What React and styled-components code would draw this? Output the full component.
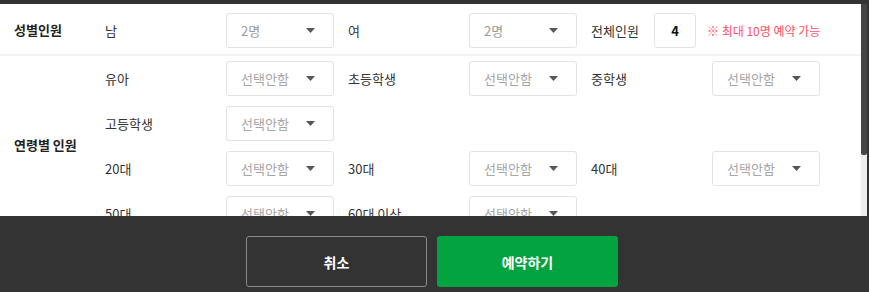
import React from 'react';
import styled, { createGlobalStyle } from 'styled-components';

const GlobalStyle = createGlobalStyle`
  html, body {
    margin: 0;
    padding: 0;
    background: #333333;
  }
  body {
    font-family: "Noto Sans CJK KR", "Noto Sans", sans-serif;
  }
`;

const ageRows = [
  ['유아', '초등학생', '중학생'],
  ['고등학생'],
  ['20대', '30대', '40대'],
  ['50대', '60대 이상'],
];

const Caret = () => (
  <svg width="9" height="5" viewBox="0 0 9 5">
    <path d="M0 0 H9 L4.5 5 Z" fill="#555" />
  </svg>
);

const SelectField = ({ value, dim }) => (
  <SelectBox>
    <SelectText dim={dim}>{value}</SelectText>
    <Caret />
  </SelectBox>
);

const Field = ({ label, value, dim }) => (
  <FieldItem>
    <SubLabel>{label}</SubLabel>
    <SelectField value={value} dim={dim} />
  </FieldItem>
);

const App = () => {
  return (
    <Page>
      <GlobalStyle />
      <Body>
        <Content>
          <Section>
            <SectionLabel>성별인원</SectionLabel>
            <Rows pad="9px 0 6px">
              <Row>
                <Field label="남" value="2명" />
                <Field label="여" value="2명" />
                <TotalItem>
                  <TotalLabel>전체인원</TotalLabel>
                  <CountBox>4</CountBox>
                  <Note>※ 최대 10명 예약 가능</Note>
                </TotalItem>
              </Row>
            </Rows>
          </Section>
          <Divider />
          <Section>
            <SectionLabel>연령별 인원</SectionLabel>
            <Rows pad="5px 0 2px">
              {ageRows.map((row, i) => (
                <Row key={i}>
                  {row.map((label) => (
                    <Field key={label} label={label} value="선택안함" dim />
                  ))}
                </Row>
              ))}
            </Rows>
          </Section>
        </Content>
        <Scrollbar>
          <Thumb />
        </Scrollbar>
      </Body>
      <Footer>
        <CancelButton>취소</CancelButton>
        <SubmitButton>예약하기</SubmitButton>
      </Footer>
    </Page>
  );
};

const Page = styled.div`
  width: 869px;
  height: 292px;
  background: #333333;
  display: flex;
  flex-direction: column;
  overflow: hidden;
`;

const Body = styled.div`
  margin-top: 4px;
  margin-right: 2px;
  height: 212px;
  display: flex;
  background: #ffffff;
`;

const Content = styled.div`
  flex: 1;
  overflow: hidden;
`;

const Scrollbar = styled.div`
  width: 6px;
  background: #eeeeee;
  display: flex;
  flex-direction: column;
`;

const Thumb = styled.div`
  height: 151px;
  background: #454545;
  border-radius: 0 0 2px 2px;
`;

const Section = styled.div`
  display: flex;
  align-items: center;
`;

const SectionLabel = styled.div`
  width: 91px;
  padding-left: 14px;
  font-size: 13px;
  font-weight: 700;
  color: #222222;
  flex-shrink: 0;
`;

const Rows = styled.div`
  display: flex;
  flex-direction: column;
  gap: 10px;
  padding: ${(props) => props.pad};
`;

const Row = styled.div`
  display: flex;
  align-items: center;
  gap: 14px;
`;

const FieldItem = styled.div`
  display: flex;
  align-items: center;
`;

const SubLabel = styled.div`
  width: 121px;
  font-size: 13px;
  color: #333333;
`;

const SelectBox = styled.div`
  box-sizing: border-box;
  width: 108px;
  height: 35px;
  border: 1px solid #e3e3e3;
  border-radius: 3px;
  display: flex;
  align-items: center;
  justify-content: space-between;
  padding: 0 18px 0 14px;
`;

const SelectText = styled.span`
  font-size: 13px;
  color: ${(props) => (props.dim ? '#a6a6a6' : '#9a9a9a')};
`;

const TotalItem = styled.div`
  display: flex;
  align-items: center;
`;

const TotalLabel = styled.div`
  width: 63px;
  font-size: 13px;
  color: #333333;
`;

const CountBox = styled.div`
  box-sizing: border-box;
  width: 42px;
  height: 35px;
  border: 1px solid #e3e3e3;
  border-radius: 3px;
  display: flex;
  align-items: center;
  justify-content: center;
  font-size: 13px;
  font-weight: 700;
  color: #111111;
`;

const Note = styled.div`
  margin-left: 11px;
  font-size: 12px;
  color: #ff5066;
`;

const Divider = styled.div`
  height: 2px;
  background: #f2f2f2;
`;

const Footer = styled.div`
  flex: 1;
  display: flex;
  justify-content: center;
  align-items: flex-start;
  gap: 10px;
  padding: 20px 5px 0 0;
`;

const BaseButton = styled.button`
  box-sizing: border-box;
  width: 181px;
  height: 51px;
  border-radius: 3px;
  font-family: "Noto Sans CJK KR", "Noto Sans", sans-serif;
  font-size: 14px;
  font-weight: 700;
  color: #ffffff;
  cursor: pointer;
`;

const CancelButton = styled(BaseButton)`
  background: #333333;
  border: 1px solid #8a8a8a;
`;

const SubmitButton = styled(BaseButton)`
  background: #03a33f;
  border: none;
`;

export default App;
